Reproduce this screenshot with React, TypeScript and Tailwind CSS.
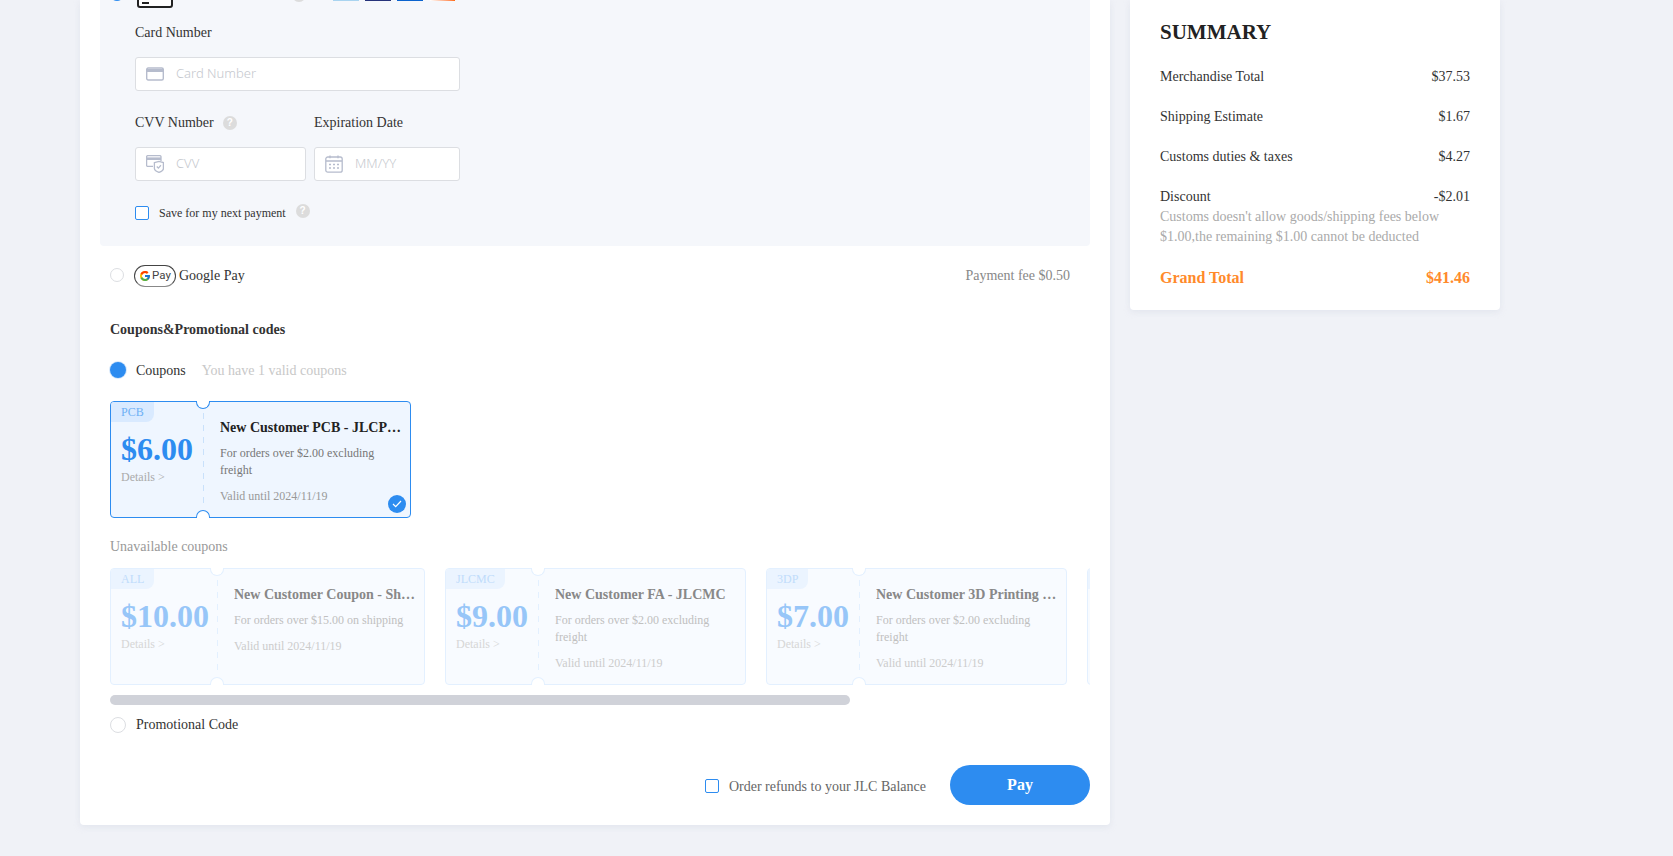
import { FcGoogle } from "react-icons/fc";

const serif = "font-['Liberation_Serif',serif]";

function Help({ className = "" }: { className?: string }) {
  return (
    <span className={`inline-flex h-[14px] w-[14px] items-center justify-center rounded-full bg-[#dcdcdc] font-['Liberation_Sans',sans-serif] text-[10px] font-bold leading-none text-white ${className}`}>
      ?
    </span>
  );
}

function CardIcon() {
  return (
    <svg width="18" height="14" viewBox="0 0 18 14" fill="none" stroke="#b6bccd" strokeWidth="1.4">
      <rect x="0.7" y="1" width="16.6" height="12" rx="1.5" />
      <rect x="0.7" y="2" width="16.6" height="3" fill="#b6bccd" stroke="none" />
    </svg>
  );
}

function CvvIcon() {
  return (
    <svg width="18" height="18" viewBox="0 0 18 18" fill="none" stroke="#b6bccd" strokeWidth="1.3">
      <path d="M15 6V1.8a1.2 1.2 0 0 0-1.2-1.2H1.8A1.2 1.2 0 0 0 .6 1.8v8.4a1.2 1.2 0 0 0 1.2 1.2H7" />
      <rect x="0.6" y="2.4" width="14.4" height="2.6" fill="#b6bccd" stroke="none" />
      <path d="M8.4 7.6L13 6.4l4.4 1.2v6c0 1.8-2.2 3-4.4 3.8-2.2-.8-4.6-2-4.6-3.8z" fill="#fff" />
      <path d="M10.8 11.5l1.6 1.6 2.5-2.8" />
    </svg>
  );
}

function CalendarIcon() {
  return (
    <svg width="18" height="18" viewBox="0 0 18 18" fill="none" stroke="#b6bccd" strokeWidth="1.3">
      <rect x="0.8" y="2" width="16.4" height="15.2" rx="2" />
      <path d="M1 6h16M5 .6v2.6M13 .6v2.6" />
      <path d="M4 9.5h2M8 9.5h2M12 9.5h2M4 13h2M8 13h2M12 13h2" strokeWidth="1.4" />
    </svg>
  );
}

function Coupon({
  tag,
  price,
  title,
  desc,
  selected = false,
}: {
  tag: string;
  price: string;
  title: string;
  desc: string;
  selected?: boolean;
}) {
  const notch = selected ? "border-[#2d8cf0]" : "border-[#e3f0ff]";
  return (
    <div
      className={`relative flex h-[117px] shrink-0 rounded-[4px] border ${
        selected ? "border-[#2d8cf0] bg-[#eff6ff]" : "border-[#e3f0ff] bg-[#f8fbff]"
      }`}
    >
      <div className="flex min-w-[92px] flex-col items-start">
        <div className={`h-[20px] rounded-br-[8px] rounded-tl-[3px] px-[10px] text-[12px] leading-[21px] ${selected ? "bg-[#d9eaff] text-[#6eb0f5]" : "bg-[#ebf4ff] text-[#c0dcfb]"}`}>
          {tag}
        </div>
        <div className={`pl-[10px] pr-[8px] pt-[8px] text-[32px] font-bold leading-[38px] ${selected ? "text-[#2d8cf0]" : "text-[#97c6f8]"}`}>
          {price}
        </div>
        <div className={`pl-[10px] pt-[1px] text-[12px] leading-[17px] ${selected ? "text-[#aaaaaa]" : "text-[#d6d6d6]"}`}>Details &gt;</div>
      </div>
      <div className="relative w-0">
        <span className={`absolute left-[-7px] top-[-1px] h-[8px] w-[14px] rounded-b-[7px] border border-t-0 bg-white ${notch}`} />
        <span className={`absolute bottom-[-1px] left-[-7px] h-[8px] w-[14px] rounded-t-[7px] border border-b-0 bg-white ${notch}`} />
        <span
          className={`absolute bottom-[12px] left-0 top-[11px] w-[1px] ${
            selected
              ? "bg-[repeating-linear-gradient(to_bottom,#c9e1fb_0,#c9e1fb_6px,transparent_6px,transparent_12px)]"
              : "bg-[repeating-linear-gradient(to_bottom,#e3f0ff_0,#e3f0ff_6px,transparent_6px,transparent_12px)]"
          }`}
        />
      </div>
      <div className="ml-[17px] mr-[8px] w-[182px] pt-[16px]">
        <div className={`truncate text-[14px] font-bold leading-[20px] ${selected ? "text-[#222222]" : "text-[#888888]"}`}>{title}</div>
        <div className={`mt-[7px] text-[12px] leading-[17px] ${selected ? "text-[#777777]" : "text-[#c0c0c0]"}`}>{desc}</div>
        <div className={`mt-[9px] text-[12px] leading-[17px] ${selected ? "text-[#999999]" : "text-[#cccccc]"}`}>Valid until 2024/11/19</div>
      </div>
      {selected && (
        <span className="absolute bottom-[4px] right-[4px] flex h-[18px] w-[18px] items-center justify-center rounded-full bg-[#2d8cf0]">
          <svg width="10" height="8" viewBox="0 0 10 8" fill="none" stroke="#fff" strokeWidth="1.2">
            <path d="M1 4l2.7 2.7L9 1" />
          </svg>
        </span>
      )}
    </div>
  );
}

function Row({ label, value }: { label: string; value: string }) {
  return (
    <div className="flex h-[20px] items-center justify-between text-[14px] leading-[20px] text-[#333333]">
      <span>{label}</span>
      <span>{value}</span>
    </div>
  );
}

export default function App() {
  return (
    <div className={`flex h-[856px] gap-[20px] overflow-hidden bg-[#f0f2f7] pl-[80px] ${serif}`}>
      <div className="h-[825px] w-[1030px] shrink-0 rounded-b-[4px] bg-white px-[20px] shadow-[0_2px_6px_rgba(200,205,220,0.35)]">
        <div className="h-[246px] rounded-b-[4px] bg-[#f5f7fb]">
          {/* top of the card row, scrolled off the page */}
          <div className="flex h-[8px] items-start overflow-hidden">
            <span className="ml-[10px] mt-[-13px] h-[14px] w-[14px] shrink-0 rounded-full bg-[#2d8cf0]" />
            <span className="relative ml-[13px] mt-[-12px] h-[20px] w-[36px] shrink-0 rounded-[3px] border-2 border-[#222222] bg-white">
              <span className="absolute bottom-[2px] left-[3px] h-[2px] w-[7px] bg-[#222222]" />
            </span>
            <span className="ml-[119px] mt-[-12px] h-[14px] w-[14px] shrink-0 rounded-full bg-[#dcdcdc]" />
            <span className="ml-[27px] h-[1px] w-[26px] shrink-0 bg-[#a9d4f0]" />
            <span className="ml-[6px] h-[1px] w-[26px] shrink-0 bg-[#26337a]" />
            <span className="ml-[6px] h-[1px] w-[26px] shrink-0 bg-[#0b63ce]" />
            <span className="ml-[7px] h-[1px] w-[25px] shrink-0 bg-gradient-to-r from-white to-[#ff6a00]" />
          </div>
          <div className="pl-[35px]">
            <div className="mt-[15px] text-[14px] leading-[20px] text-[#333333]">Card Number</div>
            <label className="mt-[14px] flex h-[34px] w-[325px] items-center rounded-[3px] border border-[#dcdee2] bg-white pl-[10px]">
              <CardIcon />
              <input placeholder="Card Number" className="mb-[1px] ml-[12px] w-[200px] font-['Noto_Sans',sans-serif] text-[13px] font-light outline-none placeholder:text-[#c5c8ce]" />
            </label>
            <div className="mt-[22px] flex text-[14px] leading-[20px] text-[#333333]">
              <span className="flex w-[179px] items-center">
                CVV Number
                <Help className="ml-[9px]" />
              </span>
              <span>Expiration Date</span>
            </div>
            <div className="mt-[14px] flex gap-[8px]">
              <label className="flex h-[34px] w-[171px] items-center rounded-[3px] border border-[#dcdee2] bg-white pl-[10px]">
                <CvvIcon />
                <input placeholder="CVV" className="mb-[1px] ml-[12px] w-[100px] font-['Noto_Sans',sans-serif] text-[13px] font-light outline-none placeholder:text-[#c5c8ce]" />
              </label>
              <label className="flex h-[34px] w-[146px] items-center rounded-[3px] border border-[#dcdee2] bg-white pl-[10px]">
                <CalendarIcon />
                <input placeholder="MM/YY" className="mb-[1px] ml-[12px] w-[90px] font-['Noto_Sans',sans-serif] text-[13px] font-light outline-none placeholder:text-[#c5c8ce]" />
              </label>
            </div>
            <div className="mt-[23px] flex items-center">
              <span className="h-[14px] w-[14px] rounded-[2px] border border-[#2d8cf0] bg-white" />
              <span className="ml-[10px] text-[12px] leading-[16px] text-[#333333]">Save for my next payment</span>
              <Help className="mb-[3px] ml-[10px]" />
            </div>
          </div>
        </div>

        <div className="pl-[10px] pr-[20px]">
          <div className="mt-[18px] flex h-[22px] items-center justify-between">
            <div className="flex items-center">
              <span className="h-[14px] w-[14px] rounded-full border border-[#dcdee2] bg-white" />
              <span className="ml-[10px] mt-[2px] flex h-[22px] w-[42px] items-center justify-center gap-[1px] rounded-full border border-[#444444] border-b-[#888888] font-['Roboto',sans-serif] text-[11.5px] leading-none text-[#444444]">
                <FcGoogle size={12} />
                Pay
              </span>
              <span className="ml-[3px] text-[14px] text-[#333333]">Google Pay</span>
            </div>
            <span className="text-[14px] text-[#888888]">Payment fee $0.50</span>
          </div>

          <div className="mt-[34px] text-[14px] font-bold leading-[20px] text-[#333333]">Coupons&amp;Promotional codes</div>

          <div className="mt-[20px] flex h-[20px] items-center text-[14px]">
            <span className="h-[16px] w-[16px] rounded-full bg-[#2d8cf0] ring-1 ring-[#d7e8fb]" />
            <span className="ml-[10px] text-[#333333]">Coupons</span>
            <span className="ml-[16px] text-[#c8c8c8]">You have 1 valid coupons</span>
          </div>
        </div>

        <div className="mt-[21px] flex pl-[10px]">
          <Coupon selected tag="PCB" price="$6.00" title="New Customer PCB - JLCPCB" desc="For orders over $2.00 excluding freight" />
        </div>

        <div className="mt-[19px] pl-[10px] text-[14px] leading-[20px] text-[#999999]">Unavailable coupons</div>

        <div className="ml-[10px] mt-[11px] flex w-[980px] gap-[20px] overflow-hidden">
          <Coupon tag="ALL" price="$10.00" title="New Customer Coupon - Shipping" desc="For orders over $15.00 on shipping" />
          <Coupon tag="JLCMC" price="$9.00" title="New Customer FA - JLCMC" desc="For orders over $2.00 excluding freight" />
          <Coupon tag="3DP" price="$7.00" title="New Customer 3D Printing Coupon" desc="For orders over $2.00 excluding freight" />
          {/* next coupon, only its edge shows before the scroll cut-off */}
          <div className="h-[117px] w-[40px] shrink-0 rounded-[4px] border border-[#e3f0ff] bg-[#f8fbff]">
            <div className="h-[20px] w-[38px] rounded-tl-[3px] bg-[#ebf4ff]" />
          </div>
        </div>

        <div className="ml-[10px] mt-[10px] h-[10px] w-[740px] rounded-full bg-[#d0d2d9]" />

        <div className="ml-[10px] mt-[9px] flex h-[20px] items-center text-[14px] text-[#333333]">
          <span className="mt-[2px] h-[16px] w-[16px] rounded-full border border-[#dcdee2] bg-white" />
          <span className="ml-[10px]">Promotional Code</span>
        </div>

        <div className="mt-[31px] flex items-center justify-end">
          <span className="mt-[2px] h-[14px] w-[14px] rounded-[2px] border border-[#2d8cf0] bg-white" />
          <span className="ml-[10px] mt-[4px] text-[14px] leading-[20px] text-[#666666]">Order refunds to your JLC Balance</span>
          <button className="ml-[24px] h-[40px] w-[140px] rounded-full bg-[#2d8cf0] text-[16px] font-bold text-white">Pay</button>
        </div>
      </div>

      <div className="h-[310px] w-[370px] shrink-0 rounded-b-[4px] bg-white px-[30px] shadow-[0_2px_6px_rgba(200,205,220,0.35)]">
        <div className="pt-[19px] text-[21px] font-bold leading-[26px] text-[#222222]">SUMMARY</div>
        <div className="mt-[22px] flex flex-col gap-[20px]">
          <Row label="Merchandise Total" value="$37.53" />
          <Row label="Shipping Estimate" value="$1.67" />
          <Row label="Customs duties & taxes" value="$4.27" />
          <div>
            <Row label="Discount" value="-$2.01" />
            <div className="text-[14px] leading-[20px] text-[#aaaaaa]">
              Customs doesn't allow goods/shipping fees below
              <br />
              $1.00,the remaining $1.00 cannot be deducted
            </div>
          </div>
        </div>
        <div className="mt-[20px] flex h-[22px] items-center justify-between text-[16px] font-bold text-[#ff8a2b]">
          <span>Grand Total</span>
          <span>$41.46</span>
        </div>
      </div>
    </div>
  );
}
